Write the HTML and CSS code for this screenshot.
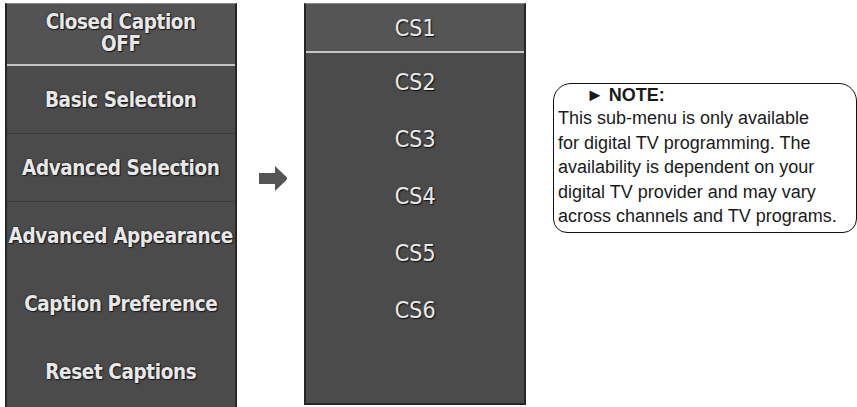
FILE: index.html
```html
<!DOCTYPE html>
<html lang="en">

	<head>
		<meta charset="UTF-8">
		<title>Closed Caption</title>
		<link rel="stylesheet" href="styles.css">
	</head>

	<body>
		<div class="menu">
			<div class="menu-head">
				<span>Closed Caption</span>
				<span>OFF</span>
			</div>
			<div class="menu-item line">Basic Selection</div>
			<div class="menu-item line">Advanced Selection</div>
			<div class="menu-item">Advanced Appearance</div>
			<div class="menu-item">Caption Preference</div>
			<div class="menu-item">Reset Captions</div>
		</div>

		<svg class="arrow" width="29" height="25" viewBox="0 0 29 25">
			<polygon points="0,7 16,7 16,0 29,12.5 16,25 16,18 0,18" fill="#555"></polygon>
		</svg>

		<div class="sub">
			<div class="sub-head">CS1</div>
			<div class="sub-item">CS2</div>
			<div class="sub-item">CS3</div>
			<div class="sub-item">CS4</div>
			<div class="sub-item">CS5</div>
			<div class="sub-item">CS6</div>
		</div>

		<div class="note">
			<div class="note-title">&#9658; NOTE:</div>
			This sub-menu is only available<br>
			for digital TV programming. The<br>
			availability is dependent on your<br>
			digital TV provider and may vary<br>
			across channels and TV programs.
		</div>
	</body>

</html>
```

FILE: styles.css
```css
body {
	margin: 0;
	width: 857px;
	height: 407px;
	overflow: hidden;
	background: #fff;
	display: flex;
	align-items: flex-start;
}

.menu,
.sub {
	font-family: "DejaVu Sans", sans-serif;
	font-stretch: condensed;
	color: #e8e8e8;
	text-shadow: 0 0 2px #111, 1px 1px 1px #1e1e1e;
	background: #4b4b4b;
	border-left: 2px solid #262626;
	border-right: 2px solid #262626;
	border-top: 1px solid #8a8a8a;
}

.menu {
	margin: 3px 0 0 5px;
	width: 228px;
	height: 410px;
	font-size: 20.5px;
	font-weight: bold;
	letter-spacing: -0.4px;
}

.menu-head {
	height: 62px;
	background: #535353;
	border-bottom: 2px solid #c4c4c4;
	display: flex;
	flex-direction: column;
	align-items: center;
	justify-content: center;
	line-height: 22px;
	padding-bottom: 2px;
	box-sizing: border-box;
}

.menu-item {
	height: 68px;
	display: flex;
	align-items: center;
	justify-content: center;
	white-space: nowrap;
	box-sizing: border-box;
}

.menu-item.line {
	border-bottom: 1px solid #3c3c3c;
}

.arrow {
	margin: 166px 0 0 22px;
}

.sub {
	margin: 3px 0 0 17px;
	width: 218px;
	height: 399px;
	font-size: 23px;
	border-bottom: 2px solid #262626;
	text-shadow: 0 0 2px #111, 1px 1px 1px #111, 0 0 1px #e8e8e8;
}

.sub-head {
	height: 47px;
	background: #555;
	border-bottom: 2px solid #c4c4c4;
	display: flex;
	align-items: center;
	justify-content: center;
}

.sub-item {
	height: 57px;
	display: flex;
	align-items: center;
	justify-content: center;
}

.note {
	margin: 83px 0 0 27px;
	width: 298px;
	flex: none;
	height: 148px;
	border: 1.5px solid #111;
	border-radius: 18px 18px 14px 14px;
	padding: 0 0 0 4px;
	font-family: "Liberation Sans", Arial, sans-serif;
	font-size: 18px;
	line-height: 24.5px;
	color: #1a1a1a;
}

.note-title {
	font-weight: bold;
	padding-left: 28px;
	line-height: 22px;
}
```
